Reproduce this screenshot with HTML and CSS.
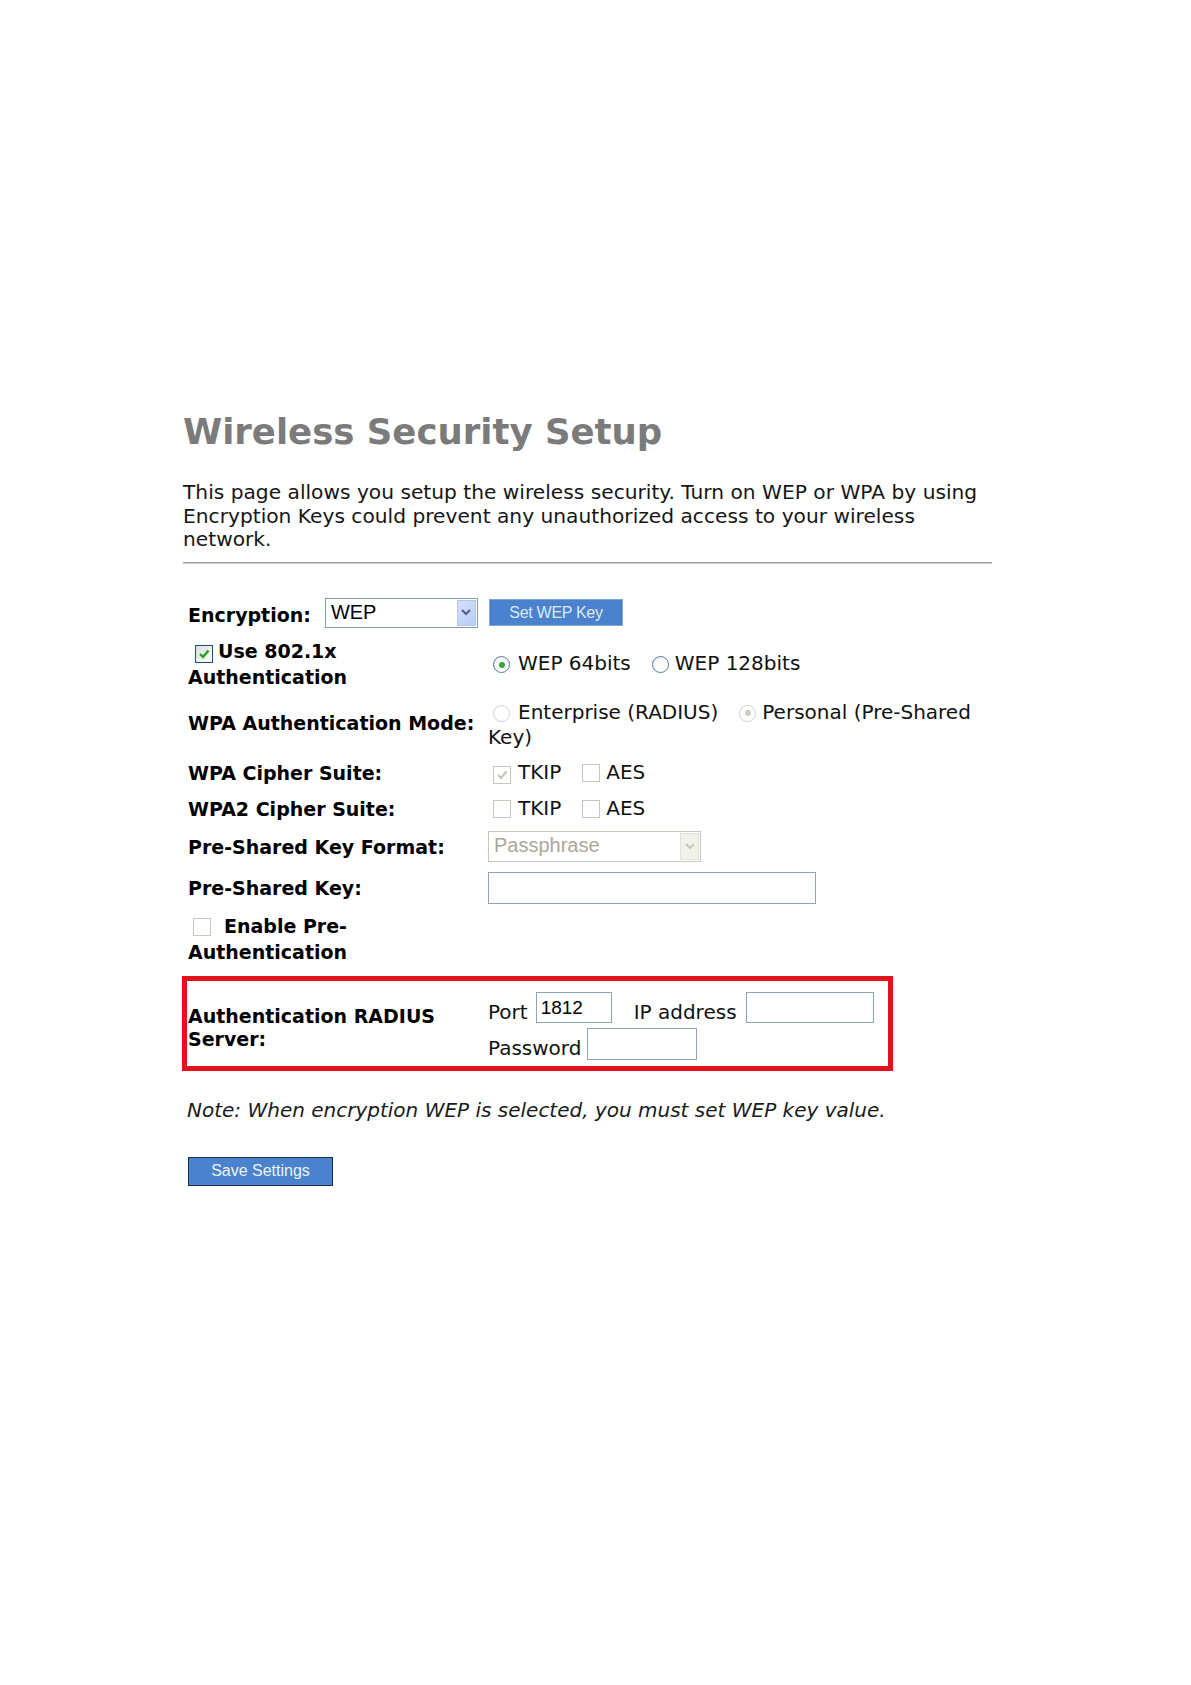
FILE: index.html
```html
<!DOCTYPE html>
<html lang="en">
<head>
<meta charset="utf-8">
<title>Wireless Security Setup</title>
<link rel="stylesheet" href="styles.css">
</head>
<body>
<div class="page">
  <h1 class="title">Wireless Security Setup</h1>
  <p class="desc">This page allows you setup the wireless security. Turn on WEP or WPA by using Encryption Keys could prevent any unauthorized access to your wireless network.</p>
  <div class="rule"></div>

  <div class="form">
    <div class="row row-enc">
      <div class="lab lab-enc"><span class="enc-text">Encryption:</span>
        <span class="sel sel-enc"><span class="sel-text">WEP</span><span class="sel-btn"><svg width="10" height="7" viewBox="0 0 10 7"><path d="M1 1 L5 5 L9 1" fill="none" stroke="#4d6185" stroke-width="2"/></svg></span></span>
      </div>
      <div class="val"><span class="btn btn-wep">Set WEP Key</span></div>
    </div>

    <div class="row row-8021x">
      <div class="lab"><span class="cb cb-first"><svg width="14" height="14" viewBox="0 0 14 14"><path d="M3 7 L6 10 L11.5 3.5" fill="none" stroke="#21a121" stroke-width="2.4"/></svg></span>Use 802.1x Authentication</div>
      <div class="val"><span class="rd rd-first rd-on"></span><span>WEP 64bits</span><span class="rd"></span><span>WEP 128bits</span></div>
    </div>

    <div class="row row-mode">
      <div class="lab lab-mode">WPA Authentication Mode:</div>
      <div class="val val-mode"><span class="rd rd-first dis"></span>Enterprise (RADIUS)<span class="rd dis rd-on"></span>Personal (Pre-Shared Key)</div>
    </div>

    <div class="row row-cipher">
      <div class="lab">WPA Cipher Suite:</div>
      <div class="val"><span class="cb cb-val dis"><svg width="14" height="14" viewBox="0 0 14 14"><path d="M3 7 L6 10 L11.5 3.5" fill="none" stroke="#c3c3bb" stroke-width="2.2"/></svg></span>TKIP<span class="cb cb-next dis"></span>AES</div>
    </div>

    <div class="row row-cipher">
      <div class="lab">WPA2 Cipher Suite:</div>
      <div class="val"><span class="cb cb-val dis"></span>TKIP<span class="cb cb-next dis"></span>AES</div>
    </div>

    <div class="row row-fmt">
      <div class="lab">Pre-Shared Key Format:</div>
      <div class="val"><span class="sel sel-fmt dis"><span class="sel-text">Passphrase</span><span class="sel-btn"><svg width="10" height="7" viewBox="0 0 10 7"><path d="M1 1 L5 5 L9 1" fill="none" stroke="#c9c9c1" stroke-width="2"/></svg></span></span></div>
    </div>

    <div class="row row-psk">
      <div class="lab">Pre-Shared Key:</div>
      <div class="val"><span class="inp inp-psk"></span></div>
    </div>

    <div class="row row-pre">
      <div class="lab"><span class="cb cb-pre dis"></span>Enable Pre-Authentication</div>
      <div class="val"></div>
    </div>

    <div class="radius">
      <div class="lab lab-radius">Authentication RADIUS Server:</div>
      <div class="val val-radius">
        <div class="rline rline-1"><span class="rtxt">Port</span><span class="inp inp-port">1812</span><span class="rtxt">IP address</span><span class="inp inp-ip"></span></div>
        <div class="rline rline-2"><span class="rtxt">Password</span><span class="inp inp-pw"></span></div>
      </div>
    </div>
  </div>

  <p class="note">Note: When encryption WEP is selected, you must set WEP key value.</p>

  <span class="btn btn-save">Save Settings</span>
</div>
</body>
</html>
```

FILE: styles.css
```css
html, body {
  margin: 0;
  padding: 0;
  background: #ffffff;
}

body {
  font-family: "DejaVu Sans", Verdana, sans-serif;
  color: #111111;
}

.page {
  padding: 411px 0 0 183px;
  width: 810px;
}

.title {
  margin: 0;
  font-size: 35.5px;
  line-height: 41px;
  font-weight: bold;
  color: #7b7b7b;
}

.desc {
  margin: 29px 0 0 0;
  width: 809px;
  font-size: 20.2px;
  line-height: 23.6px;
  color: #161616;
}

.rule {
  margin-top: 10px;
  width: 809px;
  height: 1px;
  background: #9c9c9c;
  border-bottom: 1px solid #d0d0d0;
}

.form {
  margin-top: 24px;
}

.row {
  display: grid;
  grid-template-columns: 305px 505px;
  align-items: center;
}

.row-enc { height: 50px; }
.row-8021x { height: 50px; }
.row-mode { height: 67px; }
.row-cipher { height: 36px; }
.row-fmt { height: 40px; }
.row-psk { height: 42px; }
.row-pre { height: 60px; }

.lab {
  padding-left: 5px;
  font-size: 19px;
  line-height: 26px;
  font-weight: bold;
  color: #000000;
}

.lab-enc {
  display: flex;
  align-items: center;
}

.enc-text {
  padding-top: 5px;
}

.lab-mode {
  padding-top: 4px;
}

.val {
  font-size: 20px;
  line-height: 25px;
  color: #111111;
}

.val-mode {
  padding-top: 8px;
  line-height: 25.5px;
}

/* select boxes */
.sel {
  display: inline-flex;
  align-items: stretch;
  box-sizing: border-box;
  border: 1px solid #7f9db9;
  background: #ffffff;
  font-family: "Liberation Sans", Arial, sans-serif;
  font-weight: normal;
}

.sel-enc {
  margin-left: 14px;
  width: 153px;
  height: 30px;
}

.sel-fmt {
  width: 213px;
  height: 31px;
  vertical-align: middle;
}

.sel-text {
  flex: 1;
  padding-left: 5px;
  font-size: 20px;
  line-height: 27px;
  color: #000000;
}

.sel-btn {
  width: 19px;
  margin: 1px;
  display: flex;
  align-items: center;
  justify-content: center;
  background: linear-gradient(135deg, #d6e1fb, #b9cbf7);
  border: 1px solid #b5c6ef;
  box-sizing: border-box;
}

.sel.dis {
  border-color: #c9c7ba;
}

.sel.dis .sel-text {
  color: #aca899;
}

.sel.dis .sel-btn {
  background: #f1f1ec;
  border-color: #e2e2da;
}

/* buttons */
.btn {
  display: inline-flex;
  align-items: center;
  justify-content: center;
  box-sizing: border-box;
  font-family: "Liberation Sans", Arial, sans-serif;
  background: #4a82cd;
}

.btn-wep {
  width: 134px;
  height: 27px;
  margin-left: 1px;
  border: 1px solid #7ea6dc;
  color: #dfe7f1;
  font-size: 16px;
  letter-spacing: -0.3px;
}

.btn-save {
  width: 145px;
  height: 29px;
  margin: 35px 0 0 5px;
  border: 1px solid #1f2d44;
  color: #edf2fa;
  font-size: 16px;
}

/* checkboxes */
.cb {
  display: inline-flex;
  align-items: center;
  justify-content: center;
  box-sizing: border-box;
  width: 18px;
  height: 18px;
  vertical-align: -3px;
  border: 1px solid #1c5180;
  background: linear-gradient(135deg, #dcdcd7, #ffffff);
}

.cb.dis {
  border-color: #c9c7ba;
  background: #ffffff;
}

.cb-first {
  margin: 0 5px 0 7px;
}

.cb-pre {
  margin: 0 13px 0 5px;
}

.cb-val {
  margin: 0 7px 0 5px;
}

.cb-next {
  margin: 0 6px 0 21px;
}

/* radios */
.rd {
  display: inline-block;
  position: relative;
  box-sizing: border-box;
  width: 17px;
  height: 17px;
  vertical-align: -3px;
  margin: 0 6px 0 21px;
  border-radius: 50%;
  border: 1px solid #5a7a9c;
  background: radial-gradient(circle at 65% 65%, #ffffff 40%, #e2e2dc 100%);
}

.rd-first {
  margin-left: 5px;
  margin-right: 8px;
}

.rd.rd-on::after {
  content: "";
  position: absolute;
  left: 4.5px;
  top: 4.5px;
  width: 6px;
  height: 6px;
  border-radius: 50%;
  background: #35a735;
}

.rd.dis {
  border-color: #d2d0c6;
  background: #ffffff;
}

.rd.dis.rd-on::after {
  background: #cbcbc3;
}

/* text inputs */
.inp {
  display: inline-block;
  box-sizing: border-box;
  border: 1px solid #8fa3bb;
  background: #ffffff;
  font-family: "Liberation Sans", Arial, sans-serif;
  font-size: 19px;
  line-height: 26px;
  padding: 2px 0 0 4px;
  color: #000000;
}

.inp-psk {
  width: 328px;
  height: 32px;
  vertical-align: middle;
}

.inp-port {
  width: 76px;
  height: 31px;
  margin: 0 22px 0 8px;
}

.inp-ip {
  width: 128px;
  height: 31px;
  margin-left: 9px;
}

.inp-pw {
  width: 110px;
  height: 32px;
  margin-left: 6px;
}

/* RADIUS box */
.radius {
  margin: 7px 0 0 -1px;
  width: 701px;
  height: 85px;
  border: 5px solid #e2121b;
  display: grid;
  grid-template-columns: 301px 1fr;
  align-items: center;
}

.lab-radius {
  padding: 9px 0 0 1px;
  line-height: 23px;
}

.val-radius {
  align-self: start;
  padding-top: 11px;
  display: flex;
  flex-direction: column;
  gap: 5px;
}

.rline {
  display: flex;
  align-items: center;
}

.rline-1 { height: 31px; }
.rline-2 { height: 32px; }

.rtxt {
  align-self: flex-end;
  line-height: 24px;
}

.rline-1 .rtxt {
  line-height: 21px;
}

.note {
  margin: 27px 0 0 4px;
  font-size: 20px;
  line-height: 24px;
  font-style: italic;
  color: #1a1a1a;
}
```
